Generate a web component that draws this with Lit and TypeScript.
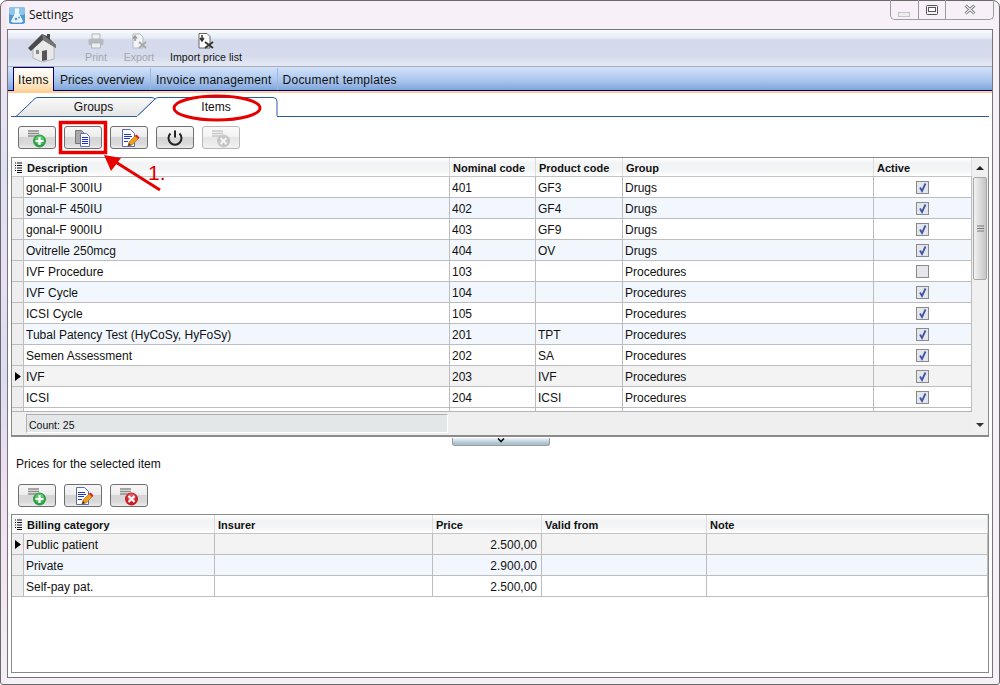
import { LitElement, html, css, svg, nothing } from "lit";
import { customElement } from "lit/decorators.js";

const listLines = (c: string) => svg`<path d="M9 4h11M9 6.500h11M9 9h9" stroke=${c} stroke-width="1.500" fill="none"/>`;

const icons: Record<string, unknown> = {
  add: svg`${listLines("#8c8c8c")}
    <circle cx="20.500" cy="14" r="6.500" fill="#2f9e45"/><circle cx="20.500" cy="13" r="4.500" fill="#5cc46a"/>
    <path d="M20.500 10v8M16.500 14h8" stroke="#fff" stroke-width="2.200"/>`,
  copy: svg`<path d="M10.500 3.500h6l3 3V16.500h-9z" fill="#a9a9a9" stroke="#777"/>
    <path d="M15.500 6.500h6l3 3V19.500h-9z" fill="#fbfbff" stroke="#6a74b4"/>
    <path d="M17 10.500h6M17 12.500h6M17 14.500h6M17 16.500h6" stroke="#2030c8"/>`,
  edit: svg`<path d="M11.500 2.500h8l4 4V19.500H11.500z" fill="#fff" stroke="#5a68b8"/>
    <path d="M13 7.500h7M13 9.500h8M13 11.500h6M13 14.500h4" stroke="#2436c8"/>
    <path d="M17 19l1-4 7-7 3 3-7 7z" fill="#f0a020" stroke="#9a5a10" stroke-width=".6"/>
    <path d="M24 9l3 3 1.500-1.500-3-3z" fill="#d22"/>
    <path d="M17 19l1-3 2 2z" fill="#333"/>`,
  power: svg`<path d="M13.500 6.500a6.500 6.500 0 1 0 9 0" fill="none" stroke="#222" stroke-width="2"/>
    <path d="M18 3.500v7" stroke="#222" stroke-width="2"/>`,
  delDisabled: svg`<g opacity=".55">${listLines("#a5a5a5")}
    <circle cx="20.500" cy="14" r="6.500" fill="#a8a8a8"/>
    <path d="M17.500 11l6 6M23.500 11l-6 6" stroke="#fff" stroke-width="2"/></g>`,
  del: svg`${listLines("#8c8c8c")}
    <circle cx="20.500" cy="14" r="6.500" fill="#c81e28"/><circle cx="20.500" cy="12.500" r="4" fill="#e85860"/>
    <path d="M17.500 11l6 6M23.500 11l-6 6" stroke="#fff" stroke-width="2"/>`,
};

const colsTop = "12px 426px 86px 87px 251px 98px";
const colsBottom = "12px 191px 218px 109px 165px 1fr";

interface Row { c: string[]; active?: boolean }

const items: Row[] = [
  { c: ["gonal-F 300IU", "401", "GF3", "Drugs"], active: true },
  { c: ["gonal-F 450IU", "402", "GF4", "Drugs"], active: true },
  { c: ["gonal-F 900IU", "403", "GF9", "Drugs"], active: true },
  { c: ["Ovitrelle 250mcg", "404", "OV", "Drugs"], active: true },
  { c: ["IVF Procedure", "103", "", "Procedures"], active: false },
  { c: ["IVF Cycle", "104", "", "Procedures"], active: true },
  { c: ["ICSI Cycle", "105", "", "Procedures"], active: true },
  { c: ["Tubal Patency Test (HyCoSy, HyFoSy)", "201", "TPT", "Procedures"], active: true },
  { c: ["Semen Assessment", "202", "SA", "Procedures"], active: true },
  { c: ["IVF", "203", "IVF", "Procedures"], active: true },
  { c: ["ICSI", "204", "ICSI", "Procedures"], active: true },
];

const prices = [
  ["Public patient", "", "2.500,00", "", ""],
  ["Private", "", "2.900,00", "", ""],
  ["Self-pay pat.", "", "2.500,00", "", ""],
];

@customElement("app-root")
export class AppRoot extends LitElement {
  static styles = css`
    :host { display: block; width: 1000px; height: 685px; overflow: hidden; font-family: "Liberation Sans", Arial, sans-serif; font-size: 12px; color: #111; }
    .window { position: relative; box-sizing: border-box; height: 685px; display: flex; flex-direction: column; border: 1px solid #6a6a6a; border-radius: 7px 7px 3px 3px; padding: 0 6px 6px 6px;
      background:
        linear-gradient(180deg, #f6e9f3 0, #eee4f4 12%, #dfe0f4 25%, #e9e0f2 40%, #dcdcf2 55%, #eedff0 70%, #f6eef6 100%) 0 0 / 6px 100% no-repeat,
        #f7f0f8; }
    .titlebar { height: 28px; flex: none; display: flex; align-items: flex-start; }
    .app-icon { margin: 6px 0 0 2px; width: 16px; height: 17px; }
    .title { margin: 7px 0 0 4px; font: 12px/14px "Open Sans", "Noto Sans", sans-serif; color: #111; }
    .controls { margin-left: auto; display: flex; height: 19px; border: 1px solid #9c9c9c; border-top: none; border-radius: 0 0 5px 5px; margin-top: -1px; margin-right: -1px; }
    .ctl { display: flex; align-items: center; justify-content: center; border-left: 1px solid #9c9c9c; }
    .ctl:first-child { border-left: none; }
    .panel { flex: 1; display: flex; flex-direction: column; border: 1px solid #757575; background: #fff; min-height: 0; }
    .toolbar { height: 37px; box-sizing: border-box; flex: none; display: flex; align-items: flex-start; border-bottom: 1px solid #aaaab8; background: linear-gradient(180deg, #f8fafd 0, #e6ebf5 8px, #d4daeb 10px, #d5dbec 26px, #e6eaf4 36px); }
    .home { margin: 3px 0 0 20px; }
    .tool { display: flex; flex-direction: column; align-items: center; font-size: 10.6px; line-height: 12px; margin-top: 3px; }
    .tool.off { color: #a5a8ae; }
    .tool svg { display: block; margin-bottom: 2px; height: 16px; }
    .print { margin-left: 26px; width: 24px; }
    .export { margin-left: 15px; width: 32px; }
    .import { margin-left: 15px; width: 72px; white-space: nowrap; }
    .maintabs { height: 24px; box-sizing: border-box; flex: none; display: flex; align-items: flex-end; padding-left: 5px; background: linear-gradient(180deg, #d2e3fa 0, #a9c5ec 60%, #7ea5dc 100%); border-bottom: 1px solid #00007a; }
    .mtab { height: 22px; box-sizing: content-box; padding: 0 5px; line-height: 25px; white-space: nowrap; border-right: 1px solid #9ab8e0; }
    .mtab.wide { letter-spacing: .23px; }
    .mtab.pad { padding-right: 6px; }
    .mtab.last { border-right: none; }
    .mtab.on { box-sizing: border-box; width: 41px; background: linear-gradient(180deg, #fdfdfb 0, #fff0d8 55%, #fdd49c 100%); border: 1px solid #00007a; border-bottom: none; padding: 0 4px; margin-right: 1px; line-height: 25px; height: 24px; margin-bottom: -1px; letter-spacing: .3px; }
    .orange { height: 2px; flex: none; background: #fdcf94; }
    .content { flex: 1; min-height: 0; display: flex; flex-direction: column; padding: 0 3px 4px 3px; }
    .subtabs { position: relative; height: 21px; flex: none; margin-top: 3px; display: flex; padding-left: 24px; }
    .subtabs svg { position: absolute; left: 0; top: 0; }
    .subtab { position: relative; line-height: 23px; text-align: center; }
    .g { width: 117px; }
    .i { width: 128px; }
    .btns { flex: none; display: flex; gap: 8px; padding-left: 7px; }
    .btn { width: 38px; height: 23px; box-sizing: border-box; border: 1px solid #6f6f6f; border-radius: 3px; background: linear-gradient(180deg, #f7f7f7 0, #ededed 45%, #d6d6d6 50%, #d9d9d9 80%, #ececec 100%); }
    .btn.off { border-color: #b8b8b8; background: linear-gradient(180deg, #fafafa 0, #f3f3f3 45%, #e6e6e6 50%, #f2f2f2 100%); }
    .btn svg { display: block; }
    .top-btns { margin-top: 9px; }
    .grid { flex: none; box-sizing: border-box; border: 1px solid #8a8a8a; background: #fff; }
    .g1 { margin-top: 8px; height: 280px; border-bottom-width: 2px; display: grid; grid-template-columns: 1fr 16px; }
    .g1-body { display: flex; flex-direction: column; min-width: 0; }
    .row, .head { display: grid; height: 21px; box-sizing: border-box; }
    .head { height: 19px; font-size: 11px; font-weight: bold; line-height: 21px; background: linear-gradient(180deg, #fff 0, #f1f3f4 30%, #f4f5f6 70%, #fff 100%); border-bottom: 1px solid #c4c4c4; }
    .head > div { padding-left: 3px; border-right: 1px solid #dcdcdc; white-space: nowrap; overflow: hidden; }
    .head > .corner { padding: 0; display: flex; align-items: center; justify-content: center; border-right: none; }
    .row { border-bottom: 1px solid #bdbdbd; line-height: 22px; background: #fff; }
    .row.alt { background: #f1f7fd; }
    .row.sel { background: #f3f3f3; }
    .row > div { padding-left: 2px; border-right: 1px solid #bdbdbd; white-space: nowrap; overflow: hidden; }
    .row > .ind { padding: 0; background: #eeeeee; display: flex; align-items: center; justify-content: center; }
    .row > .num { text-align: right; padding: 0 4px 0 0; }
    .row > .chk { padding: 0; display: flex; align-items: center; justify-content: center; }
    .tail { height: 3px; display: grid; }
    .tail > div { border-right: 1px solid #bdbdbd; }
    .tail > div:first-child { background: #eee; }
    .foot { flex: 1; border-top: 1px solid #b4b4b4; background: #efefef; padding: 2px 0 0 14px; display: flex; }
    .count { width: 422px; height: 19px; box-sizing: border-box; border-left: 1px solid #b0b0b0; border-top: 1px solid #b0b0b0; border-right: 1px solid #fff; border-bottom: 1px solid #fff; background: #e3e7e8; font-size: 10.5px; line-height: 20px; padding-left: 2px; }
    .sb { background: #f0f0f0; display: flex; flex-direction: column; align-items: center; position: relative; }
    .sb-arrow { height: 19px; flex: none; display: flex; align-items: center; justify-content: center; }
    .thumb { width: 14px; height: 103px; flex: none; box-sizing: border-box; border: 1px solid #a8a8a8; border-radius: 2px; background: linear-gradient(90deg, #f2f2f2 0, #dedede 45%, #c4c4c4 100%); display: flex; align-items: center; justify-content: center; }
    .sb-fill { flex: 1; }
    .splitter { flex: none; width: 98px; height: 8px; margin-left: 441px; box-sizing: border-box; border: 1px solid #9a9a9a; border-top: none; border-radius: 0 0 3px 3px; background: linear-gradient(180deg, #eef3f6 0, #a8c2d2 80%); display: flex; justify-content: center; margin-top: 1px; }
    .label { flex: none; margin: 11px 0 0 5px; line-height: 14px; }
    .low-btns { margin-top: 13px; }
    .g2 { margin-top: 7px; flex: 1; min-height: 0; }
    .box { width: 13px; height: 13px; display: block; }
    .overlay { position: absolute; left: -1px; top: -1px; width: 1000px; height: 685px; pointer-events: none; }
    .one { position: absolute; left: 147px; top: 160px; color: #e00000; font-size: 21px; line-height: 24px; }
  `;

  private check(on: boolean) {
    return html`<svg class="box" viewBox="0 0 13 13">
      <rect x=".5" y=".5" width="12" height="12" fill="#e4e6ec" stroke="#8a8a8a"/>
      ${on ? svg`<path d="M4 6.500l2 3.500 3.500-7.500" fill="none" stroke="#3f56a8" stroke-width="1.800"/>` : nothing}
    </svg>`;
  }

  private colsIcon() {
    return html`<svg width="7" height="11" viewBox="0 0 7 11"><path d="M0 1h1M0 3.500h1M0 6h1M0 8.500h1M2 1h5M2 3.500h5M2 6h5M2 8.500h5M2 10.500h5" stroke="#111" stroke-width="1.100"/></svg>`;
  }

  private ind(sel: boolean) {
    return html`<div class="ind">${sel ? html`<svg width="6" height="9" viewBox="0 0 6 9"><path d="M0 0l6 4.500L0 9z" fill="#000"/></svg>` : nothing}</div>`;
  }

  private btn(name: string, off = false) {
    return html`<div class="btn ${off ? "off" : ""}"><svg width="36" height="21" viewBox="0 0 36 21">${icons[name]}</svg></div>`;
  }

  render() {
    return html`
      <div class="window">
        <div class="titlebar">
          <svg class="app-icon" viewBox="0 0 16 17">
            <rect width="16" height="17" rx="2.500" fill="#4d9bd6"/><rect width="16" height="8" rx="2.500" fill="#8cc4ea"/>
            <path d="M6 2h4M6.500 2v4.500L2.800 13.500q-.5 1.500 1 1.500h8.400q1.500 0 1-1.500L9.500 6.500V2" fill="#eaf4fb" stroke="#fff"/>
            <circle cx="7" cy="12" r="1.300" fill="#4d9bd6"/><circle cx="10" cy="10.500" r=".9" fill="#4d9bd6"/>
          </svg>
          <span class="title">Settings</span>
          <div class="controls">
            <div class="ctl" style="width:27px"><svg width="13" height="8" viewBox="0 0 13 8" style="margin-top:9px"><rect x=".5" y="2.500" width="11" height="4" fill="#ededf0" stroke="#c4c4c8"/></svg></div>
            <div class="ctl" style="width:26px"><svg width="12" height="10" viewBox="0 0 12 10"><rect x=".5" y=".5" width="11" height="9" rx="1" fill="none" stroke="#555" stroke-width="1"/><rect x="2.500" y="2.500" width="7" height="4" fill="#fff" stroke="#555"/></svg></div>
            <div class="ctl" style="width:47px"><svg width="12" height="11" viewBox="0 0 12 11"><path d="M1.500 1.500l9 8M10.500 1.500l-9 8" stroke="#666" stroke-width="3"/><path d="M1.500 1.500l9 8M10.500 1.500l-9 8" stroke="#f2f2f2" stroke-width="1.300"/></svg></div>
          </div>
        </div>
        <div class="panel">
          <div class="toolbar">
            <svg class="home" width="30" height="30" viewBox="0 0 30 30">
              <path d="M5 14v11l9 4 12-3V12L15 5z" fill="#e9e9e9" stroke="#8a8a8a" stroke-width=".5"/>
              <path d="M0 15L14 1l5 2V1h3v5l6 6v3L15 7 3 18z" fill="#4a4a4a"/>
              <path d="M14 1l14 11v3L15 7z" fill="#777"/>
              <path d="M14 18l5-1v10l-5 1z" fill="#555"/>
              <rect x="8" y="17" width="3" height="4" fill="#888"/>
            </svg>
            <div class="tool off print">
              <svg width="18" height="16" viewBox="0 0 18 16"><path d="M5 1h8v5H5z" fill="#eef0f4" stroke="#b0b4ba"/><rect x="1.500" y="6" width="15" height="6" rx="1" fill="#b4bac0"/><path d="M4.500 10h9v5h-9z" fill="#eef0f4" stroke="#b0b4ba"/></svg>
              Print
            </div>
            <div class="tool off export">
              <svg width="20" height="16" viewBox="0 0 20 16"><path d="M4 1h7l3 3v11H4z" fill="#f2f3f6" stroke="#b4b8be"/><path d="M6 8V4M4 5.500l2-2.500 2 2.500" stroke="#999" stroke-width="1.500" fill="none"/><path d="M10 9l7 6M17 9l-7 6" stroke="#a8a8a8" stroke-width="1.800"/></svg>
              Export
            </div>
            <div class="tool import">
              <svg width="20" height="16" viewBox="0 0 20 16"><path d="M3 0.500h8l3 3V15H3z" fill="#fff" stroke="#666"/><path d="M6 2v5M4 5l2 3 2-3" stroke="#333" stroke-width="1.500" fill="none"/><path d="M9 9l8 6M17 9l-8 6" stroke="#333" stroke-width="1.800"/></svg>
              Import price list
            </div>
          </div>
          <div class="maintabs">
            <div class="mtab on">Items</div>
            <div class="mtab pad">Prices overview</div>
            <div class="mtab wide">Invoice management</div>
            <div class="mtab wide last">Document templates</div>
          </div>
          <div class="orange"></div>
          <div class="content">
            <div class="subtabs">
              <svg width="978" height="21" viewBox="0 0 978 21">
                <path d="M.0 20.500H5L24 2.500q1-1 3-1H140q3 0 4 1.500L126 20.500H5z" fill="url(#tabg)" stroke="#2a5aa0"/>
                <path d="M126 20.500L144 3q1.500-1.500 4-1.500H262q4 0 4 4V20.500H978" fill="#fff" stroke="#2a5aa0"/>
                <path d="M126 20.500H266" stroke="#fff" stroke-width="1.500"/>
                <defs><linearGradient id="tabg" x1="0" y1="0" x2="0" y2="1"><stop offset="0" stop-color="#fafafa"/><stop offset="1" stop-color="#e4e4e4"/></linearGradient></defs>
              </svg>
              <div class="subtab g">Groups</div>
              <div class="subtab i">Items</div>
            </div>
            <div class="btns top-btns">
              ${this.btn("add")}${this.btn("copy")}${this.btn("edit")}${this.btn("power")}${this.btn("delDisabled", true)}
            </div>
            <div class="grid g1">
              <div class="g1-body">
                <div class="head" style="grid-template-columns:${colsTop}">
                  <div class="corner">${this.colsIcon()}</div>
                  <div>Description</div><div>Nominal code</div><div>Product code</div><div>Group</div><div>Active</div>
                </div>
                ${items.map((r, i) => html`
                  <div class="row ${i === 9 ? "sel" : i % 2 ? "alt" : ""}" style="grid-template-columns:${colsTop}">
                    ${this.ind(i === 9)}
                    ${r.c.map((t) => html`<div>${t}</div>`)}
                    <div class="chk">${this.check(!!r.active)}</div>
                  </div>`)}
                <div class="tail" style="grid-template-columns:${colsTop}"><div></div><div></div><div></div><div></div><div></div><div></div></div>
                <div class="foot"><div class="count">Count: 25</div></div>
              </div>
              <div class="sb">
                <div class="sb-arrow"><svg width="8" height="5" viewBox="0 0 8 5"><path d="M0 5l4-4 4 4z" fill="#222"/></svg></div>
                <div class="thumb"><svg width="7" height="7" viewBox="0 0 7 7"><path d="M0 1h7M0 3.500h7M0 6h7" stroke="#777"/></svg></div>
                <div class="sb-fill"></div>
                <div class="sb-arrow"><svg width="8" height="5" viewBox="0 0 8 5"><path d="M0 0l4 4 4-4z" fill="#333"/></svg></div>
              </div>
            </div>
            <div class="splitter"><svg width="8" height="5" viewBox="0 0 8 5"><path d="M1 .5l3 3 3-3" fill="none" stroke="#111" stroke-width="1.600"/></svg></div>
            <div class="label">Prices for the selected item</div>
            <div class="btns low-btns">${this.btn("add")}${this.btn("edit")}${this.btn("del")}</div>
            <div class="grid g2">
              <div class="head" style="grid-template-columns:${colsBottom}">
                <div class="corner">${this.colsIcon()}</div>
                <div>Billing category</div><div>Insurer</div><div>Price</div><div>Valid from</div><div>Note</div>
              </div>
              ${prices.map((r, i) => html`
                <div class="row ${i === 0 ? "sel" : i === 1 ? "alt" : ""}" style="grid-template-columns:${colsBottom}">
                  ${this.ind(i === 0)}
                  ${r.map((t, j) => html`<div class=${j === 2 ? "num" : ""}>${t}</div>`)}
                </div>`)}
            </div>
          </div>
        </div>
        <svg class="overlay" viewBox="0 0 1000 685">
          <rect x="60.500" y="122.500" width="45" height="30" fill="none" stroke="#e60000" stroke-width="3.500"/>
          <ellipse cx="217" cy="108" rx="43" ry="12" fill="none" stroke="#e60000" stroke-width="3"/>
          <path d="M160 190L114 161" stroke="#e60000" stroke-width="3" fill="none"/>
          <path d="M104 155L121 158L111 171z" fill="#e60000"/>
        </svg>
        <div class="one">1.</div>
      </div>
    `;
  }
}
